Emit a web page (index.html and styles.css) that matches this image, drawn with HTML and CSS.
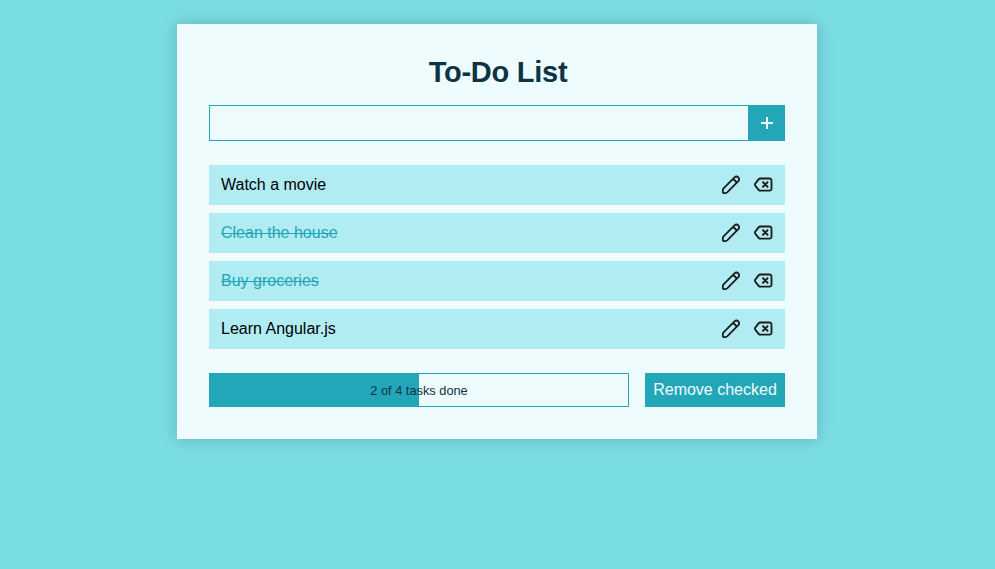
FILE: index.html
```html
<!DOCTYPE html>
<html lang="en">
<head>
<meta charset="utf-8">
<title>To-Do List</title>
<link rel="stylesheet" href="styles.css">
</head>
<body>
<svg class="defs" aria-hidden="true">
  <symbol id="pencil" viewBox="0 0 24 24"><path d="M3 16 16.2 2.8a3.1 3.1 0 0 1 4.6 4.6L7.4 20.8Q6.6 21.5 5.6 21.6L3.4 21.7Q2.2 21.8 2.2 20.6L2.3 18Q2.3 16.8 3 16ZM14.5 4.5l4.6 4.6"/></symbol>
  <symbol id="backspace" viewBox="0 0 24 24"><path d="M8.8 4.2H20a2.2 2.2 0 0 1 2.2 2.2V16.6a2.2 2.2 0 0 1-2.2 2.2H8.8Q7.5 18.8 6.7 17.8L2.7 12.7Q1.9 11.5 2.7 10.3L6.7 5.2Q7.5 4.2 8.8 4.2ZM12 8.7l5.4 5.4M17.4 8.7l-5.4 5.4"/></symbol>
</svg>
<main class="card">
  <h1 class="title">To-Do List</h1>
  <form class="add">
    <input class="add-input" type="text" aria-label="New task">
    <button class="add-button" type="button" aria-label="Add"><svg class="plus" viewBox="0 0 14 14"><path d="M7 1v12M1 7h12"/></svg></button>
  </form>
  <ul class="tasks">
    <li class="task"><span class="label">Watch a movie</span><svg class="icon"><use href="#pencil"/></svg><svg class="icon"><use href="#backspace"/></svg></li>
    <li class="task done"><span class="label">Clean the house</span><svg class="icon"><use href="#pencil"/></svg><svg class="icon"><use href="#backspace"/></svg></li>
    <li class="task done"><span class="label">Buy groceries</span><svg class="icon"><use href="#pencil"/></svg><svg class="icon"><use href="#backspace"/></svg></li>
    <li class="task"><span class="label">Learn Angular.js</span><svg class="icon"><use href="#pencil"/></svg><svg class="icon"><use href="#backspace"/></svg></li>
  </ul>
  <div class="footer">
    <div class="progress">2 of 4 tasks done</div>
    <button class="remove" type="button">Remove checked</button>
  </div>
</main>
</body>
</html>
```
FILE: styles.css
```css
* { box-sizing: border-box; }
body {
  margin: 0;
  padding-top: 24.4px;
  min-height: 100vh;
  background: #7bdde4;
  font: 16px/20px "Liberation Sans", Arial, sans-serif;
  color: #0c3444;
}
.defs { display: none; }
.card {
  width: 640px;
  height: 415px;
  margin: 0 auto 0 177px;
  padding: 30px 32px 32px;
  background: #eefcfe;
  box-shadow: 0 0 16px rgba(0, 0, 0, 0.2);
}
.title {
  margin: 0 0 15px;
  padding-left: 2px;
  font-size: 29px;
  line-height: 36px;
  letter-spacing: -0.25px;
  text-align: center;
}
.add { display: flex; height: 36px; margin: 0 0 24px; }
.add-input {
  flex: 1;
  min-width: 0;
  padding: 0 12px;
  border: 1px solid #22a6b8;
  border-right: 0;
  background: transparent;
  font: inherit;
  outline: none;
}
.add-button {
  display: flex;
  align-items: center;
  justify-content: center;
  width: 37px;
  padding: 0;
  border: 0;
  background: #22a6b8;
}
.plus { width: 14px; height: 14px; fill: none; stroke: #effdfe; stroke-width: 2; }
.tasks {
  display: flex;
  flex-direction: column;
  gap: 8px;
  margin: 0 0 24px;
  padding: 0;
  list-style: none;
}
.task {
  display: flex;
  align-items: center;
  gap: 12px;
  height: 40px;
  padding: 0 12px;
  background: #b0ecf2;
  color: #000;
}
.label { flex: 1; }
.done .label { color: #22a6b8; text-decoration: line-through; }
.icon {
  width: 20px;
  height: 20px;
  fill: none;
  stroke: #1c1c1c;
  stroke-width: 2.2;
  stroke-linecap: round;
  stroke-linejoin: round;
}
.footer { display: flex; gap: 16px; height: 34px; }
.progress {
  flex: 1;
  border: 1px solid #22a6b8;
  background: linear-gradient(90deg, #22a6b8 50%, transparent 50%);
  font-size: 12.8px;
  line-height: 34px;
  text-align: center;
}
.remove {
  width: 140px;
  padding: 0;
  border: 0;
  background: #22a6b8;
  color: #effdfe;
  font: inherit;
}
```
